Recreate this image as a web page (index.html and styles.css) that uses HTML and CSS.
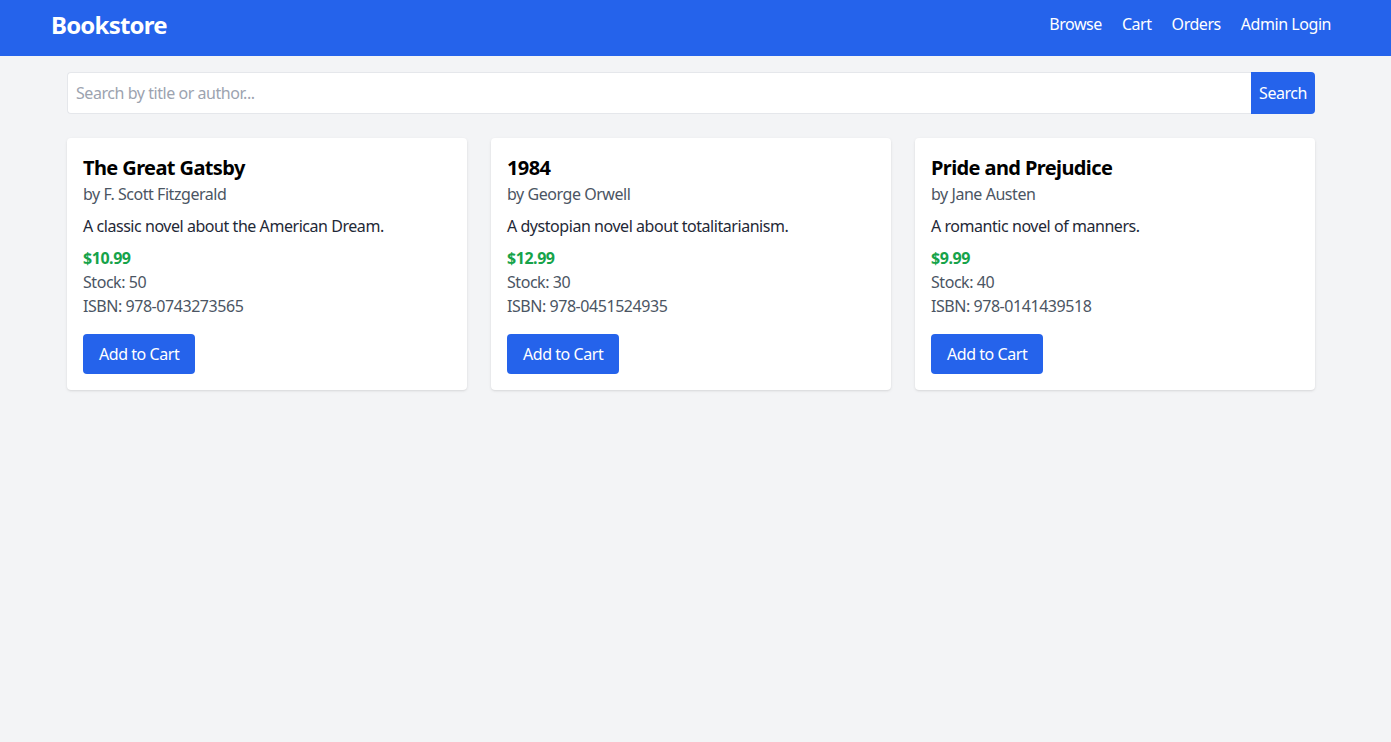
FILE: index.html
```html
<!DOCTYPE html>
<html lang="en">
<head>
<meta charset="utf-8">
<title>Bookstore</title>
<link rel="stylesheet" href="styles.css">
</head>
<body>
<div class="page">
  <nav class="navbar">
    <div class="nav-inner">
      <a class="brand" href="#">Bookstore</a>
      <div class="nav-links">
        <a href="#">Browse</a>
        <a href="#">Cart</a>
        <a href="#">Orders</a>
        <a href="#">Admin Login</a>
      </div>
    </div>
  </nav>
  <main class="container">
    <form class="search">
      <input class="search-input" type="text" placeholder="Search by title or author...">
      <button class="search-btn" type="button">Search</button>
    </form>
    <div class="grid">
      <div class="card">
        <h2 class="title">The Great Gatsby</h2>
        <p class="author">by F. Scott Fitzgerald</p>
        <p class="desc">A classic novel about the American Dream.</p>
        <p class="price">$10.99</p>
        <p class="meta">Stock: 50</p>
        <p class="meta">ISBN: 978-0743273565</p>
        <button class="add-btn" type="button">Add to Cart</button>
      </div>
      <div class="card">
        <h2 class="title">1984</h2>
        <p class="author">by George Orwell</p>
        <p class="desc">A dystopian novel about totalitarianism.</p>
        <p class="price">$12.99</p>
        <p class="meta">Stock: 30</p>
        <p class="meta">ISBN: 978-0451524935</p>
        <button class="add-btn" type="button">Add to Cart</button>
      </div>
      <div class="card">
        <h2 class="title">Pride and Prejudice</h2>
        <p class="author">by Jane Austen</p>
        <p class="desc">A romantic novel of manners.</p>
        <p class="price">$9.99</p>
        <p class="meta">Stock: 40</p>
        <p class="meta">ISBN: 978-0141439518</p>
        <button class="add-btn" type="button">Add to Cart</button>
      </div>
    </div>
  </main>
</div>
</body>
</html>
```

FILE: styles.css
```css
* { box-sizing: border-box; }
html, body { margin: 0; padding: 0; }
body {
  background: #f3f4f6;
  font-family: "Noto Sans", "Open Sans", sans-serif;
  font-size: 16px;
  line-height: 24px;
  letter-spacing: -0.45px;
  color: #1f2937;
  min-height: 742px;
}
.page { padding-right: 9px; }
.navbar {
  background: #2563eb;
  margin-right: -9px;
  padding-right: 9px;
}
.nav-inner {
  width: 1280px;
  margin: 0 auto;
  height: 56px;
  padding-bottom: 6px;
  display: flex;
  align-items: center;
  justify-content: space-between;
}
.brand {
  color: #fff;
  font-size: 24px;
  line-height: 32px;
  font-weight: 700;
  letter-spacing: -0.8px;
  text-decoration: none;
}
.nav-links { display: flex; gap: 20px; padding-bottom: 2px; }
.nav-links a { color: #fff; text-decoration: none; }
.container {
  width: 1280px;
  margin: 0 auto;
  padding: 16px 16px;
}
.search { display: flex; margin-bottom: 24px; }
.search-input {
  flex: 1;
  height: 42px;
  border: 1px solid #e5e7eb;
  border-right: none;
  border-radius: 4px 0 0 4px;
  padding: 8px;
  font: inherit;
  letter-spacing: inherit;
  color: #1f2937;
  background: #fff;
  outline: none;
}
.search-input::placeholder { color: #9ca3af; }
.search-btn {
  height: 42px;
  border: none;
  background: #2563eb;
  color: #fff;
  font: inherit;
  letter-spacing: inherit;
  padding: 8px;
  border-radius: 0 4px 4px 0;
}
.grid {
  display: grid;
  grid-template-columns: repeat(3, 1fr);
  gap: 24px;
}
.card {
  background: #fff;
  border-radius: 4px;
  box-shadow: 0 1px 3px rgba(0,0,0,0.1), 0 1px 2px -1px rgba(0,0,0,0.1);
  padding: 16px;
}
.card p { margin: 0; }
.title {
  margin: 0;
  font-size: 20px;
  line-height: 28px;
  font-weight: 700;
  letter-spacing: -0.6px;
  color: #000;
}
.author { color: #4b5563; }
.desc { margin-top: 8px !important; color: #1f2937; }
.price { margin-top: 8px !important; color: #16a34a; font-weight: 700; }
.meta { color: #4b5563; }
.add-btn {
  margin-top: 16px;
  background: #2563eb;
  color: #fff;
  border: none;
  border-radius: 4px;
  padding: 8px 16px;
  font: inherit;
  letter-spacing: inherit;
  height: 40px;
}
```
